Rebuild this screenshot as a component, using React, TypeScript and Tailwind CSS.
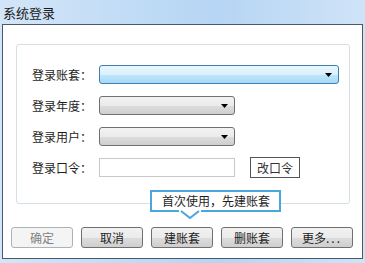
const font = '"Noto Sans CJK SC", "Microsoft YaHei", sans-serif';

function Arrow() {
  return (
    <svg width="7" height="4" viewBox="0 0 7 4" className="shrink-0">
      <path d="M0 0 H7 L3.5 4 Z" fill="#000" />
    </svg>
  );
}

function Combo({ wide, active }: { wide?: boolean; active?: boolean }) {
  return (
    <div
      className={`flex h-[19px] items-center justify-end rounded-[3px] border pr-[6px] ${wide ? 'w-[240px]' : 'w-[136px]'} ${
        active
          ? 'border-[#3c7fb1] bg-[linear-gradient(to_bottom,#eaf6fd_0%,#d9f0fc_50%,#bee6fd_51%,#a7d9f5_100%)]'
          : 'border-[#707070] bg-[linear-gradient(to_bottom,#f2f2f2_0%,#ebebeb_50%,#dddddd_51%,#cfcfcf_100%)]'
      }`}
    >
      <Arrow />
    </div>
  );
}

function Row({ label, children }: { label: string; children: React.ReactNode }) {
  return (
    <div className="flex h-[19px] items-center">
      <span className="w-[67px] text-[12px] leading-none text-[#1e1e1e]">{label}</span>
      {children}
    </div>
  );
}

function Btn({ children, disabled }: { children: React.ReactNode; disabled?: boolean }) {
  return (
    <div
      className={`flex h-[21px] w-[62px] items-center justify-center rounded-[3px] border text-[12px] leading-none ${
        disabled
          ? 'border-[#adb2b5] bg-[#f4f4f4] text-[#838383]'
          : 'border-[#707070] bg-[linear-gradient(to_bottom,#f2f2f2_0%,#ebebeb_50%,#dddddd_51%,#cfcfcf_100%)] text-[#1e1e1e]'
      }`}
    >
      {children}
    </div>
  );
}

export default function App() {
  return (
    <div
      className="flex h-[263px] w-[365px] flex-col bg-[linear-gradient(to_right,#d3e5f8_0%,#bcd9f5_45%,#b6d5f4_60%,#cfe3f7_100%)]"
      style={{ fontFamily: font }}
    >
      {/* Title bar */}
      <div className="flex h-[24px] items-center pl-[3px] text-[13px] leading-none text-[#1a1a1a]">系统登录</div>

      {/* Body */}
      <div className="relative mx-[2px] h-[235px] border border-[#4b5866] bg-white">
        <div className="ml-[13px] mr-[12px] mt-[19px] h-[160px] rounded-[3px] border border-[#d5dfe5] pl-[15px] pt-[20px]">
          <div className="flex flex-col gap-[12px]">
            <Row label="登录账套：">
              <Combo wide active />
            </Row>
            <Row label="登录年度：">
              <Combo />
            </Row>
            <Row label="登录用户：">
              <Combo />
            </Row>
            <Row label="登录口令：">
              <div className="h-[19px] w-[136px] border border-[#c9c9c9] bg-white" />
              <div className="ml-[15px] flex h-[21px] w-[50px] items-center justify-center border border-[#555] bg-white text-[12px] leading-none text-[#333]">
                改口令
              </div>
            </Row>
          </div>
        </div>

        {/* Tooltip */}
        <div className="absolute left-[147px] top-[165px] h-[22px] w-[131px] border-2 border-[#4aa6dc] bg-white pl-[10px] pt-[2px] text-[12px] leading-[14px] text-[#1e1e1e]">
          首次使用，先建账套
        </div>
        <svg className="absolute left-[176px] top-[185px]" width="22" height="10" viewBox="0 0 22 10">
          <path d="M0 1 H22" stroke="#fff" strokeWidth="2" />
          <path d="M2 1 L11 8 L20 1" fill="#fff" stroke="#4aa6dc" strokeWidth="2" />
        </svg>

        {/* Buttons */}
        <div className="mt-[23px] flex gap-[8px] pl-[8px]">
          <Btn disabled>确定</Btn>
          <Btn>取消</Btn>
          <Btn>建账套</Btn>
          <Btn>删账套</Btn>
          <Btn>
            更多<span className="tracking-[2px]">...</span>
          </Btn>
        </div>
      </div>
    </div>
  );
}
